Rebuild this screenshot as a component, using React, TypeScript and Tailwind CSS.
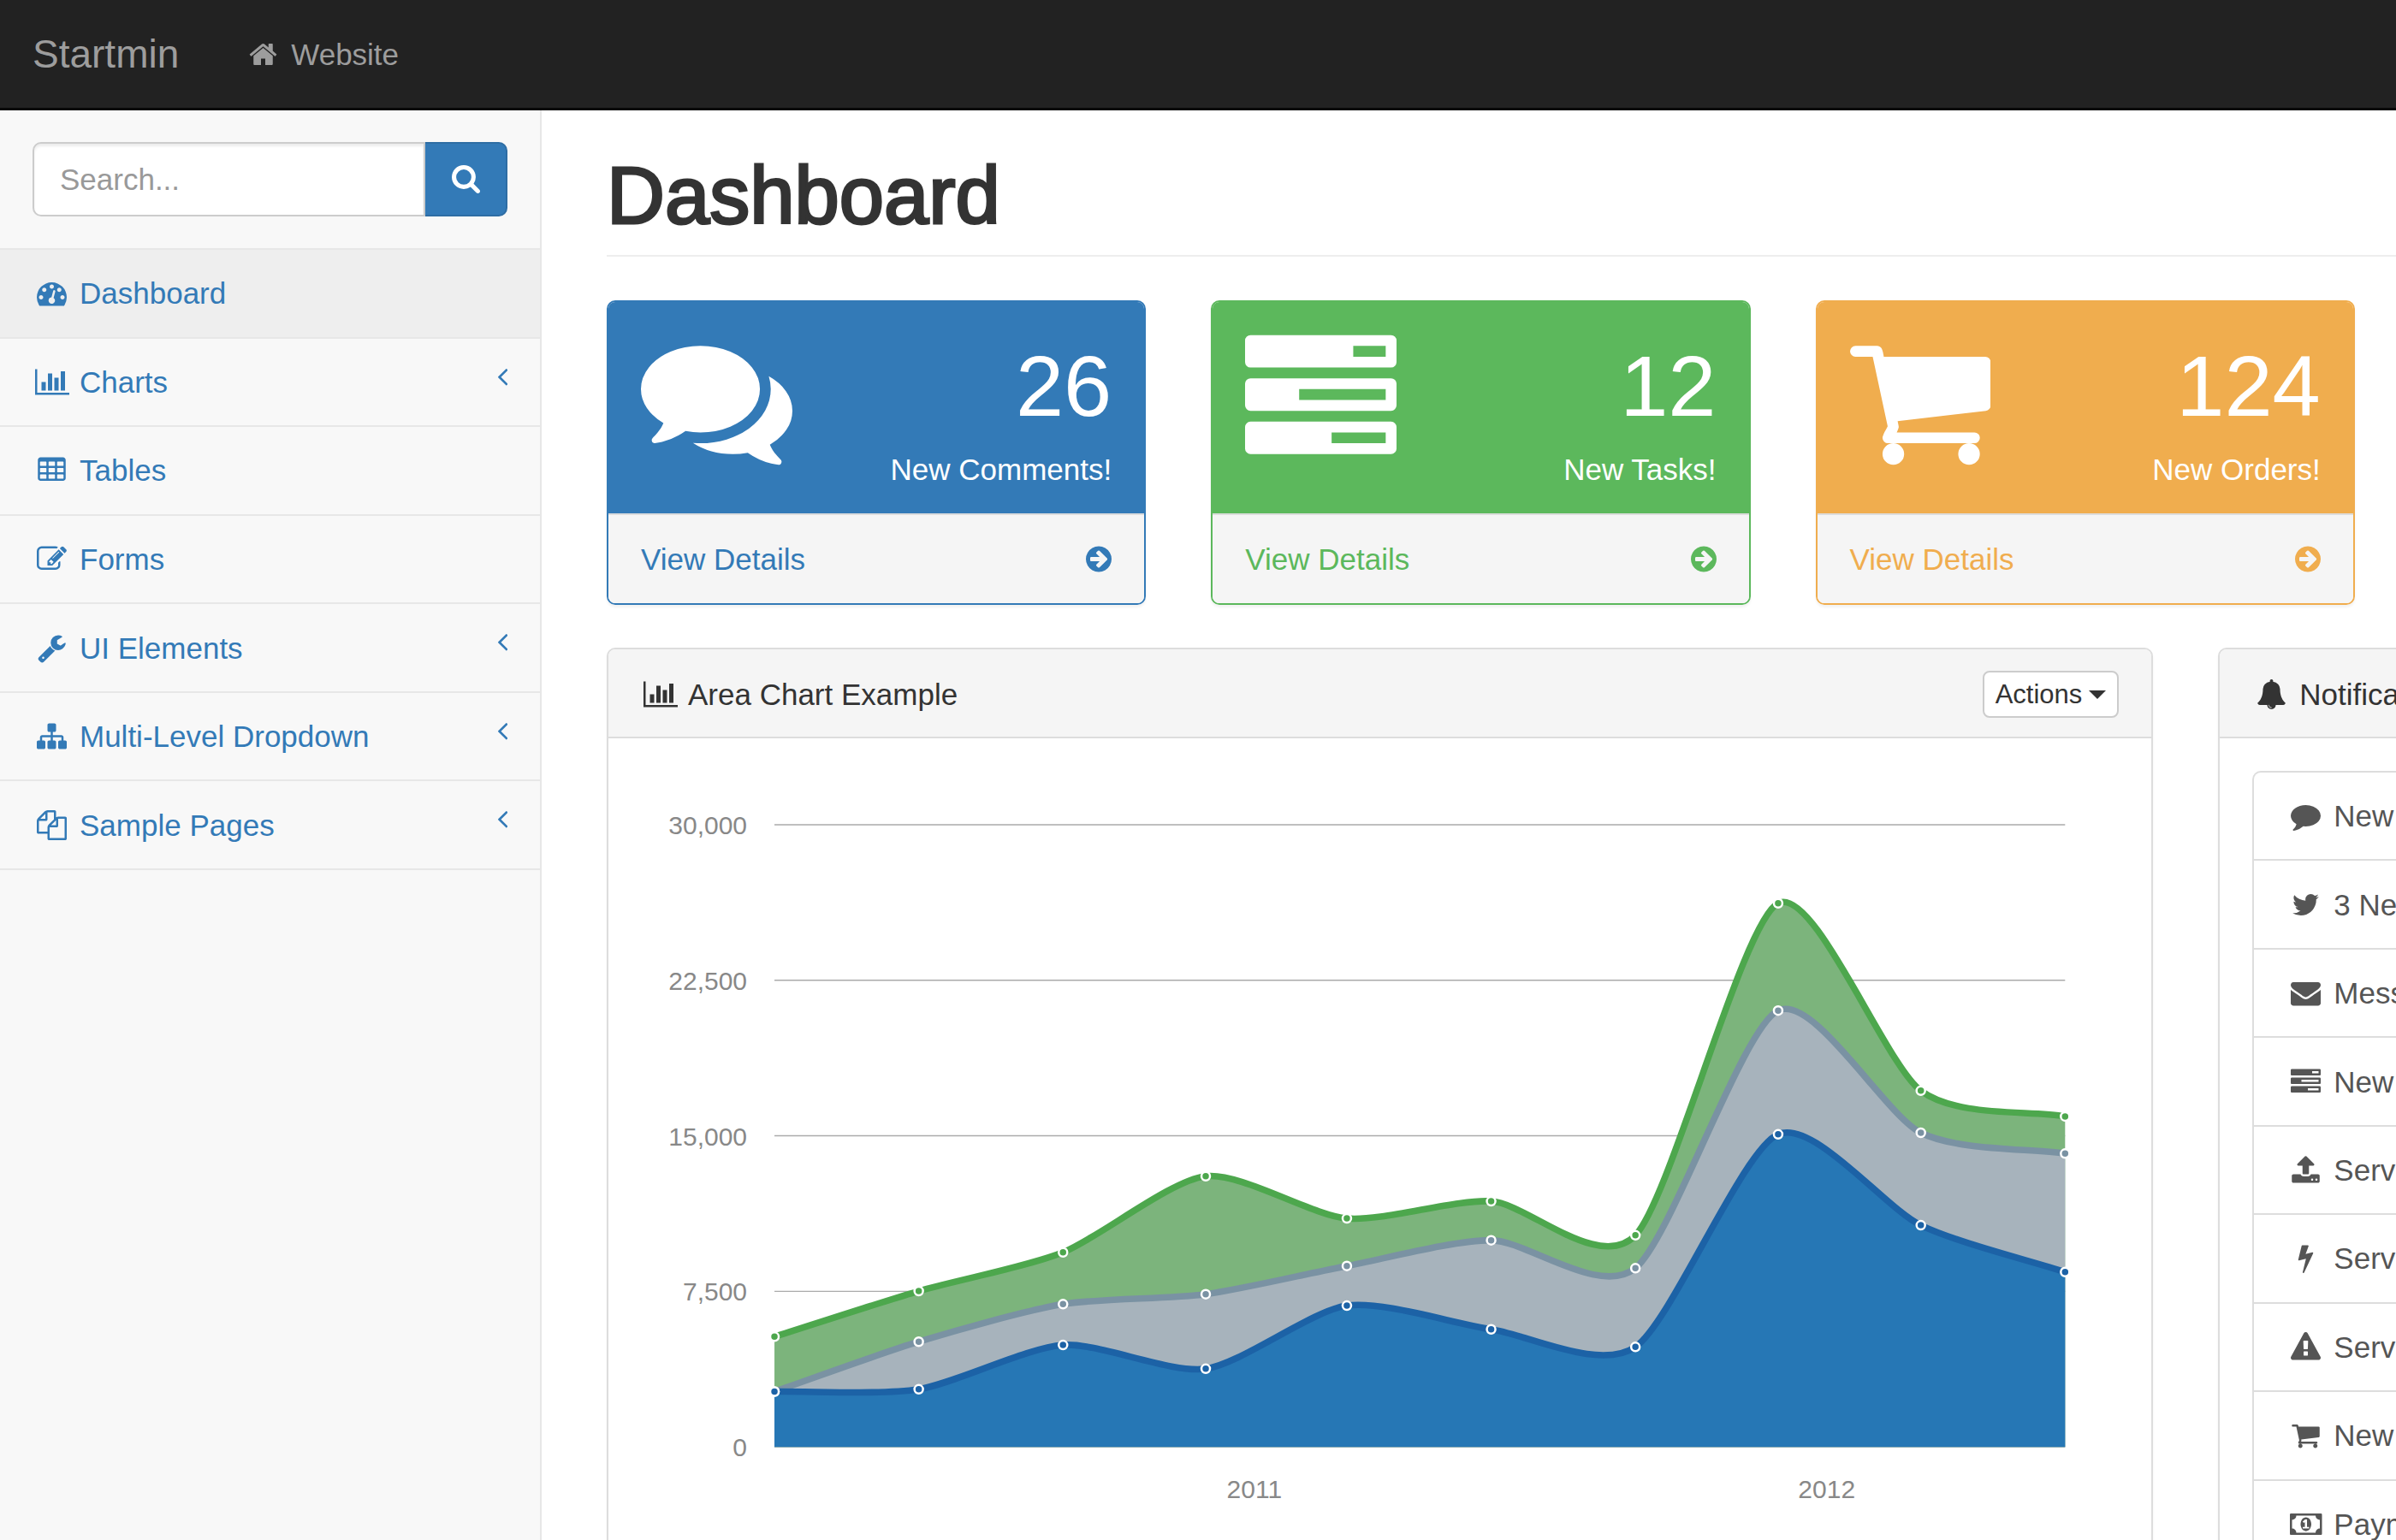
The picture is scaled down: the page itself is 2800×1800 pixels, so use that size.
import type { ReactNode } from "react";

/* ---------- icons (1792-unit grid) ---------- */

type Glyph = { box: string; d: string };

const cell = (x: number, y: number) =>
  `M${x} ${y}v-192q0-14-9-23t-23-9h-320q-14 0-23 9t-9 23v192q0 14 9 23t23 9h320q14 0 23-9t9-23z`;

const bar = (y: number) =>
  `M1792 ${y}v256q0 26-19 45t-45 19h-1664q-26 0-45-19t-19-45v-256q0-26 19-45t45-19h1664q26 0 45 19t19 45z`;

const SQUARE = "0 0 1792 1792";

const CART =
  "M704 1536q0 52-38 90t-90 38-90-38-38-90 38-90 90-38 90 38 38 90zm896 0q0 52-38 90t-90 38-90-38-38-90 38-90 90-38 90 38 38 90zm128-1088v512q0 24-16.5 42.5t-40.5 21.5l-1044 122q13 60 13 70 0 16-24 64h920q26 0 45 19t19 45-19 45-45 19h-1024q-26 0-45-19t-19-45q0-11 8-31.5t16-36 21.5-40 15.5-29.5l-177-823h-204q-26 0-45-19t-19-45 19-45 45-19h256q16 0 28.5 6.5t19.5 15.5 13 24.5 8 26 5.5 29.5 4.5 26h1201q26 0 45 19t19 45z";

const glyphs = {
  home: {
    box: SQUARE,
    d: "M1472 992v480q0 26-19 45t-45 19h-384v-384h-256v384h-384q-26 0-45-19t-19-45v-480q0-1 .5-3t.5-3l575-474 575 474q1 2 1 6zm223-69l-62 74q-8 9-21 11h-3q-13 0-21-7l-692-577-692 577q-12 8-24 7-13-2-21-11l-62-74q-8-10-7-23.5t11-21.5l719-599q32-26 76-26t76 26l244 204v-195q0-14 9-23t23-9h192q14 0 23 9t9 23v408l219 182q10 8 11 21.5t-7 23.5z",
  },
  search: {
    box: "64 128 1664 1664",
    d: "M1216 832q0-185-131.5-316.5t-316.5-131.5-316.5 131.5-131.5 316.5 131.5 316.5 316.5 131.5 316.5-131.5 131.5-316.5zm512 832q0 52-38 90t-90 38q-54 0-90-38l-343-342q-179 124-399 124-143 0-273.5-55.5t-225-150-150-225-55.5-273.5 55.5-273.5 150-225 225-150 273.5-55.5 273.5 55.5 225 150 150 225 55.5 273.5q0 220-124 399l343 343q37 37 37 90z",
  },
  dashboard: {
    box: SQUARE,
    d: "M384 1152q0-53-37.5-90.5t-90.5-37.5-90.5 37.5-37.5 90.5 37.5 90.5 90.5 37.5 90.5-37.5 37.5-90.5zm192-448q0-53-37.5-90.5t-90.5-37.5-90.5 37.5-37.5 90.5 37.5 90.5 90.5 37.5 90.5-37.5 37.5-90.5zm428 481l101-382q6-26-7.5-48.5t-38.5-29.5-48 6.5-30 39.5l-101 382q-60 5-107 43.5t-63 98.5q-20 77 20 146t117 89 146-20 89-117q16-60-6-117t-72-91zm660-33q0-53-37.5-90.5t-90.5-37.5-90.5 37.5-37.5 90.5 37.5 90.5 90.5 37.5 90.5-37.5 37.5-90.5zm-640-640q0-53-37.5-90.5t-90.5-37.5-90.5 37.5-37.5 90.5 37.5 90.5 90.5 37.5 90.5-37.5 37.5-90.5zm448 192q0-53-37.5-90.5t-90.5-37.5-90.5 37.5-37.5 90.5 37.5 90.5 90.5 37.5 90.5-37.5 37.5-90.5zm320 448q0 261-141 483-19 29-54 29h-1402q-35 0-54-29-141-221-141-483 0-182 71-348t191-286 286-191 348-71 348 71 286 191 191 286 71 348z",
  },
  barChart: {
    box: "0 0 2048 1792",
    d: "M640 896v512h-256v-512h256zm384-512v1024h-256v-1024h256zm1024 1152v128h-2048v-1536h128v1408h1920zm-640-896v768h-256v-768h256zm384-384v1152h-256v-1152h256z",
  },
  table: {
    box: SQUARE,
    d:
      [576, 1088, 1600].map((x) => [608, 992, 1376].map((y) => cell(x, y)).join("")).join("") +
      "M1728 288v1088q0 66-47 113t-113 47h-1344q-66 0-113-47t-47-113v-1088q0-66 47-113t113-47h1344q66 0 113 47t47 113z",
  },
  edit: {
    box: SQUARE,
    d: "M888 1184l116-116-152-152-116 116v56h96v96h56zm440-720q-16-16-33 1l-350 350q-17 17-1 33t33-1l350-350q17-17 1-33zm80 594v190q0 119-84.5 203.5t-203.5 84.5h-832q-119 0-203.5-84.5t-84.5-203.5v-832q0-119 84.5-203.5t203.5-84.5h832q63 0 117 25 15 7 18 23 3 17-9 29l-49 49q-14 14-32 8-23-6-45-6h-832q-66 0-113 47t-47 113v832q0 66 47 113t113 47h832q66 0 113-47t47-113v-126q0-13 9-22l64-64q15-15 35-7t20 29zm-96-738l288 288-672 672h-288v-288zm444 132l-92 92-288-288 92-92q28-28 68-28t68 28l152 152q28 28 28 68t-28 68z",
  },
  wrench: {
    box: SQUARE,
    d: "M448 1472q0-26-19-45t-45-19-45 19-19 45 19 45 45 19 45-19 19-45zm644-420l-682 682q-37 37-90 37-52 0-91-37l-106-108q-38-36-38-90 0-53 38-91l681-681q39 98 114.5 173.5t173.5 114.5zm634-435q0 39-23 106-47 134-164.5 217.5t-258.5 83.5q-185 0-316.5-131.5t-131.5-316.5 131.5-316.5 316.5-131.5q58 0 121.5 16.5t107.5 46.5q16 11 16 28t-16 28l-293 169v224l193 107q5-3 79-48.5t135.5-81 70.5-35.5q15 0 23.5 10t8.5 25z",
  },
  sitemap: {
    box: SQUARE,
    d: "M1792 1248v320q0 40-28 68t-68 28h-320q-40 0-68-28t-28-68v-320q0-40 28-68t68-28h96v-192h-512v192h96q40 0 68 28t28 68v320q0 40-28 68t-68 28h-320q-40 0-68-28t-28-68v-320q0-40 28-68t68-28h96v-192h-512v192h96q40 0 68 28t28 68v320q0 40-28 68t-68 28h-320q-40 0-68-28t-28-68v-320q0-40 28-68t68-28h96v-192q0-52 38-90t90-38h512v-192h-96q-40 0-68-28t-28-68v-320q0-40 28-68t68-28h320q40 0 68 28t28 68v320q0 40-28 68t-68 28h-96v192h512q52 0 90 38t38 90v192h96q40 0 68 28t28 68z",
  },
  files: {
    box: SQUARE,
    d: "M1696 384q40 0 68 28t28 68v1216q0 40-28 68t-68 28h-960q-40 0-68-28t-28-68v-288h-544q-40 0-68-28t-28-68v-672q0-40 20-88t48-76l408-408q28-28 76-48t88-20h416q40 0 68 28t28 68v328q68-40 128-40h416zm-544 213l-299 299h299v-299zm-640-384l-299 299h299v-299zm196 647l316-316v-416h-384v416q0 40-28 68t-68 28h-416v640h512v-256q0-40 20-88t48-76zm956 804v-1152h-384v416q0 40-28 68t-68 28h-416v640h896z",
  },
  angleLeft: {
    box: "621 0 582 1792",
    d: "M1203 544q0 13-10 23l-393 393 393 393q10 10 10 23t-10 23l-50 50q-10 10-23 10t-23-10l-466-466q-10-10-10-23t10-23l466-466q10-10 23-10t23 10l50 50q10 10 10 23z",
  },
  comments: {
    box: SQUARE,
    d: "M1408 768q0 139-94 257t-256.5 186.5-353.5 68.5q-86 0-176-16-124 88-278 128-36 9-86 16h-3q-11 0-20.5-8t-11.5-21q-1-3-1-6.5t.5-6.5 2-6l2.5-5t3.5-5.5 4-5 4.5-5 4-4.5q5-6 23-25t26-29.5 22.5-29 25-38.5 20.5-44q-124-72-195-177t-71-224q0-139 94-257t256.5-186.5 353.5-68.5 353.5 68.5 256.5 186.5 94 257zm384 256q0 120-71 224.5t-195 176.5q10 24 20.5 44t25 38.5 22.5 29 26 29.5 23 25q1 1 4 4.5t4.5 5 4 5 3.5 5.5l2.5 5t2 6 .5 6.5-1 6.5q-3 14-13 22t-22 7q-50-7-86-16-154-40-278-128-90 16-176 16-271 0-472-132 58 4 88 4 161 0 309-45t264-129q125-92 192-212t67-254q0-77-23-152 129 71 204 178t75 230z",
  },
  comment: {
    box: SQUARE,
    d: "M1792 896q0 174-120 321.5t-326 233-450 85.5q-70 0-145-8-198 175-460 242-49 14-114 22-17 2-30.5-9t-17.5-29v-1q-3-4-.5-12t2-10 4.5-9.5l6-9 7-8.5 8-9q7-8 31-34.5t34.5-38 31-39.5 32.5-51 27-59 26-76q-157-89-247.5-220t-90.5-281q0-130 71-248.5t191-204.5 286-136.5 348-50.5q244 0 450 85.5t326 233 120 321.5z",
  },
  tasks: {
    box: SQUARE,
    d:
      "M1024 1408h640v-128h-640v128zm-384-512h1024v-128h-1024v128zm640-512h384v-128h-384v128z" +
      [192, 704, 1216].map(bar).join(""),
  },
  cart: { box: SQUARE, d: CART },
  cartWide: { box: "64 0 1664 1792", d: CART },
  arrowCircle: {
    box: "128 0 1536 1792",
    d: "M1413 896q0-27-18-45l-91-91-362-362q-18-18-45-18t-45 18l-91 91q-18 18-18 45t18 45l189 189h-502q-26 0-45 19t-19 45v128q0 26 19 45t45 19h502l-189 189q-19 19-19 45t19 45l91 91q18 18 45 18t45-18l362-362 91-91q18-18 18-45zm251 0q0 209-103 385.5t-279.5 279.5-385.5 103-385.5-103-279.5-279.5-103-385.5 103-385.5 279.5-279.5 385.5-103 385.5 103 279.5 279.5 103 385.5z",
  },
  bell: {
    box: SQUARE,
    d: "M912 1696q0-16-16-16-59 0-101.5-42.5t-42.5-101.5q0-16-16-16t-16 16q0 73 51.5 124.5t124.5 51.5q16 0 16-16zm816-288q0 52-38 90t-90 38h-448q0 106-75 181t-181 75-181-75-75-181h-448q-52 0-90-38t-38-90q50-42 91-88t85-119.5 74.5-158.5 50-206 19.5-260q0-152 117-282.5t307-158.5q-8-19-8-39 0-40 28-68t68-28 68 28 28 68q0 20-8 39 190 28 307 158.5t117 282.5q0 139 19.5 260t50 206 74.5 158.5 85 119.5 91 88z",
  },
  twitter: {
    box: SQUARE,
    d: "M1684 408q-67 98-162 167 1 14 1 42 0 130-38 259.5t-115.5 248.5-184.5 210.5-258 146-323 54.5q-271 0-496-145 35 4 78 4 225 0 401-138-105-2-188-64.5t-114-159.5q33 5 61 5 43 0 85-11-112-23-185.5-111.5t-73.5-205.5v-4q68 38 146 41-66-44-105-115t-39-154q0-88 44-163 121 149 294.5 238.5t371.5 99.5q-8-38-8-74 0-134 94.5-228.5t228.5-94.5q140 0 236 102 109-21 205-78-37 115-142 178 93-10 186-50z",
  },
  envelope: {
    box: SQUARE,
    d: "M1792 710v794q0 66-47 113t-113 47h-1472q-66 0-113-47t-47-113v-794q44 49 101 87 362 246 497 345 57 42 92.5 65.5t94.5 48 110 24.5h2q51 0 110-24.5t94.5-48 92.5-65.5q170-123 498-345 57-39 100-87zm0-294q0 79-49 151t-122 123q-376 261-468 325-10 7-42.5 31t-54 38.5-52 32.5-57.5 27-50 9h-2q-23 0-50-9t-57.5-27-52-32.5-54-38.5-42.5-31q-91-64-262-182.5t-205-142.5q-62-42-117-115.5t-55-136.5q0-78 41.5-130t118.5-52h1472q65 0 112.5 47t47.5 113z",
  },
  upload: {
    box: SQUARE,
    d: "M1344 1472q0-26-19-45t-45-19-45 19-19 45 19 45 45 19 45-19 19-45zm256 0q0-26-19-45t-45-19-45 19-19 45 19 45 45 19 45-19 19-45zm128-224v320q0 40-28 68t-68 28h-1472q-40 0-68-28t-28-68v-320q0-40 28-68t68-28h427q21 56 70.5 92t110.5 36h256q61 0 110.5-36t70.5-92h427q40 0 68 28t28 68zm-325-648q-17 40-59 40h-256v448q0 26-19 45t-45 19h-256q-26 0-45-19t-19-45v-448h-256q-42 0-59-40-17-39 14-69l448-448q18-19 45-19t45 19l448 448q31 30 14 69z",
  },
  bolt: {
    box: SQUARE,
    d: "M1333 566q18 20 7 44l-540 1157q-13 25-42 25-4 0-14-2-17-5-25.5-19t-4.5-30l197-808-406 101q-4 1-12 1-18 0-31-11-18-15-13-39l201-825q4-14 16-23t28-9h328q19 0 32 12.5t13 29.5q0 8-5 18l-171 463 396-98q8-2 12-2 19 0 34 15z",
  },
  warning: {
    box: SQUARE,
    d: "M1024 1375v-190q0-14-9.5-23.5t-22.5-9.5h-192q-13 0-22.5 9.5t-9.5 23.5v190q0 14 9.5 23.5t22.5 9.5h192q13 0 22.5-9.5t9.5-23.5zm-2-374l18-459q0-12-10-19-13-11-24-11h-220q-11 0-24 11-10 7-10 21l17 457q0 10 10 16.5t24 6.5h185q14 0 23.5-6.5t10.5-16.5zm-14-934l768 1408q35 63-2 126-17 29-46.5 46t-63.5 17h-1536q-34 0-63.5-17t-46.5-46q-37-63-2-126l768-1408q17-31 47-49t65-18 65 18 47 49z",
  },
  money: {
    box: "0 0 1920 1792",
    d: "M768 1152h384v-96h-128v-448h-114l-148 137 77 80q42-37 55-57h2v288h-128v96zm512-256q0 70-21 142t-59.5 134-101.5 101-138 39-138-39-101.5-101-59.5-134-21-142 21-142 59.5-134 101.5-101 138-39 138 39 101.5 101 59.5 134 21 142zm512 256v-512q-106 0-181-75t-75-181h-1152q0 106-75 181t-181 75v512q106 0 181 75t75 181h1152q0-106 75-181t181-75zm128-832v1152q0 26-19 45t-45 19h-1792q-26 0-45-19t-19-45v-1152q0-26 19-45t45-19h1792q26 0 45 19t19 45z",
  },
} satisfies Record<string, Glyph>;

type IconName = keyof typeof glyphs;

function Icon({ name, className = "h-[35px] w-auto" }: { name: IconName; className?: string }) {
  const g = glyphs[name];
  return (
    <svg viewBox={g.box} className={`shrink-0 ${className}`} fill="currentColor" fillRule="evenodd" aria-hidden="true">
      <path d={g.d} />
    </svg>
  );
}

/* Icon centred in a fixed-width slot, followed by its label. */
function IconLabel({ icon, children }: { icon: IconName; children: ReactNode }) {
  return (
    <span className="flex items-center gap-[10px] whitespace-nowrap">
      <span className="flex w-[45px] shrink-0 justify-center">
        <Icon name={icon} />
      </span>
      {children}
    </span>
  );
}

/* ---------- header & sidebar ---------- */

function Navbar() {
  return (
    <header className="flex shrink-0 items-center border-b-[3px] border-[#080808] bg-[#222] text-[#9d9d9d]">
      <a href="#" className="px-[38px] text-[46px] leading-[126px]">
        Startmin
      </a>
      <a href="#" className="px-[38px]">
        <IconLabel icon="home">Website</IconLabel>
      </a>
    </header>
  );
}

const menu: { icon: IconName; label: string; nested?: boolean; active?: boolean }[] = [
  { icon: "dashboard", label: "Dashboard", active: true },
  { icon: "barChart", label: "Charts", nested: true },
  { icon: "table", label: "Tables" },
  { icon: "edit", label: "Forms" },
  { icon: "wrench", label: "UI Elements", nested: true },
  { icon: "sitemap", label: "Multi-Level Dropdown", nested: true },
  { icon: "files", label: "Sample Pages", nested: true },
];

function Sidebar() {
  return (
    <aside className="w-[633px] shrink-0 border-r-2 border-[#e7e7e7] bg-[#f8f8f8]">
      <form className="flex border-b-2 border-[#e7e7e7] px-[38px] py-[37px]" onSubmit={(e) => e.preventDefault()}>
        <input
          type="text"
          aria-label="Search"
          placeholder="Search..."
          className="h-[87px] min-w-0 flex-1 rounded-l-[10px] border-2 border-[#ccc] bg-white px-[30px] shadow-[inset_0_3px_3px_rgba(0,0,0,0.075)] outline-none placeholder:text-[#999]"
        />
        <button
          type="submit"
          aria-label="Submit search"
          className="flex w-24 items-center justify-center rounded-r-[10px] border-2 border-l-0 border-[#2e6da4] bg-[#337ab7] text-white"
        >
          <Icon name="search" className="size-[33px]" />
        </button>
      </form>
      <ul className="grid min-h-[725px] auto-rows-fr">
        {menu.map((m) => (
          <li key={m.label} className="border-b-2 border-[#e7e7e7]">
            <a
              href="#"
              className={`flex h-full items-center justify-between px-[38px] text-[#337ab7] ${m.active ? "bg-[#eee]" : ""}`}
            >
              <IconLabel icon={m.icon}>{m.label}</IconLabel>
              {m.nested && <Icon name="angleLeft" className="mt-[26px] h-[35px] w-auto self-start" />}
            </a>
          </li>
        ))}
      </ul>
    </aside>
  );
}

/* ---------- stat cards ---------- */

const cards: {
  icon: IconName;
  value: string;
  label: string;
  border: string;
  bg: string;
  text: string;
}[] = [
  { icon: "comments", value: "26", label: "New Comments!", border: "border-[#337ab7]", bg: "bg-[#337ab7]", text: "text-[#337ab7]" },
  { icon: "tasks", value: "12", label: "New Tasks!", border: "border-[#5cb85c]", bg: "bg-[#5cb85c]", text: "text-[#5cb85c]" },
  { icon: "cartWide", value: "124", label: "New Orders!", border: "border-[#f0ad4e]", bg: "bg-[#f0ad4e]", text: "text-[#f0ad4e]" },
];

function StatCard({ card }: { card: (typeof cards)[number] }) {
  return (
    <section
      className={`col-span-3 overflow-hidden rounded-[10px] border-2 shadow-[0_3px_3px_rgba(0,0,0,0.05)] ${card.border}`}
    >
      <div className={`flex items-start justify-between px-[38px] py-[26px] text-white ${card.bg}`}>
        <Icon name={card.icon} className="h-[177px] w-auto" />
        <div className="text-right">
          <div className="text-[101px] leading-[144px]">{card.value}</div>
          <div className="leading-[51px]">{card.label}</div>
        </div>
      </div>
      <a
        href="#"
        className={`flex items-center justify-between border-t-2 border-t-[#ddd] bg-[#f5f5f5] px-[38px] py-[26px] leading-[51px] ${card.text}`}
      >
        <span>View Details</span>
        <Icon name="arrowCircle" />
      </a>
    </section>
  );
}

/* ---------- panels ---------- */

function Panel({
  icon,
  title,
  action,
  className,
  children,
}: {
  icon: IconName;
  title: string;
  action?: ReactNode;
  className: string;
  children: ReactNode;
}) {
  return (
    <section
      className={`overflow-hidden rounded-[10px] border-2 border-[#ddd] bg-white shadow-[0_3px_3px_rgba(0,0,0,0.05)] ${className}`}
    >
      <div className="flex h-[104px] items-center justify-between border-b-2 border-[#ddd] bg-[#f5f5f5] px-[38px] pt-[3px]">
        <h2>
          <IconLabel icon={icon}>{title}</IconLabel>
        </h2>
        {action}
      </div>
      <div className="p-[38px]">{children}</div>
    </section>
  );
}

/* ---------- area chart ---------- */

const PLOT = { left: 156, right: 1664, top: 63, bottom: 790 };
const MAX = 30000;
const SPAN_DAYS = 823;

const px = (day: number) => PLOT.left + ((PLOT.right - PLOT.left) * day) / SPAN_DAYS;
const py = (v: number) => PLOT.bottom - ((PLOT.bottom - PLOT.top) * v) / MAX;

/* Each row: days since the first quarter, iPhone, iPad, iPod Touch. */
const quarters = [
  [0, 2666, 0, 2647],
  [92, 2778, 2294, 2441],
  [184, 4912, 1969, 2501],
  [275, 3767, 3597, 5689],
  [365, 6810, 1914, 2293],
  [457, 5670, 4293, 1881],
  [549, 4820, 3795, 1588],
  [640, 15073, 5967, 5175],
  [731, 10687, 4460, 2028],
  [823, 8432, 5713, 1791],
];

type Point = { x: number; y: number };

const stack = (depth: number): Point[] =>
  quarters.map(([day, ...vals]) => ({
    x: px(day),
    y: py(vals.slice(0, depth).reduce((a, b) => a + b, 0)),
  }));

/* Painted back to front: the tallest stack first. */
const series = [
  { points: stack(3), line: "#4da74d", fill: "#7cb47c" },
  { points: stack(2), line: "#7a92a3", fill: "#a7b3bc" },
  { points: stack(1), line: "#1c62a6", fill: "#2677b5" },
];

function smooth(points: Point[]) {
  const slope = points.map((_, i) => {
    const a = points[Math.max(0, i - 1)];
    const b = points[Math.min(points.length - 1, i + 1)];
    return (b.y - a.y) / (b.x - a.x);
  });
  return points
    .map((p, i) => {
      if (i === 0) return `M${p.x},${p.y}`;
      const q = points[i - 1];
      const dx = (p.x - q.x) / 4;
      const y1 = Math.min(PLOT.bottom, q.y + dx * slope[i - 1]);
      const y2 = Math.min(PLOT.bottom, p.y - dx * slope[i]);
      return `C${q.x + dx},${y1},${p.x - dx},${y2},${p.x},${p.y}`;
    })
    .join("");
}

function AreaChart() {
  return (
    <svg viewBox="0 0 1727 890" className="block h-auto w-full" role="img" aria-label="Area chart of quarterly totals">
      {[30000, 22500, 15000, 7500, 0].map((v) => (
        <g key={v}>
          <text x={124} y={py(v) + 11} textAnchor="end" className="fill-[#888] text-[30px]">
            {v.toLocaleString("en-US")}
          </text>
          <path d={`M${PLOT.left},${py(v)}H${PLOT.right}`} stroke="#aaa" strokeWidth={1.4} />
        </g>
      ))}
      <text x={px(306)} y={850} textAnchor="middle" className="fill-[#888] text-[30px]">
        2011
      </text>
      <text x={px(671)} y={850} textAnchor="middle" className="fill-[#888] text-[30px]">
        2012
      </text>
      {series.map((s) => (
        <g key={s.line}>
          <path d={`${smooth(s.points)}L${PLOT.right},${PLOT.bottom}H${PLOT.left}Z`} fill={s.fill} />
          <path d={smooth(s.points)} fill="none" stroke={s.line} strokeWidth={7.6} />
        </g>
      ))}
      {series.map((s) =>
        s.points.map((p) => (
          <circle key={`${s.line}${p.x}`} cx={p.x} cy={p.y} r={5} fill={s.line} stroke="#fff" strokeWidth={2.5} />
        )),
      )}
    </svg>
  );
}

/* ---------- notifications ---------- */

const notifications: { icon: IconName; label: string }[] = [
  { icon: "comment", label: "New Comment" },
  { icon: "twitter", label: "3 New Followers" },
  { icon: "envelope", label: "Message Sent" },
  { icon: "tasks", label: "New Task" },
  { icon: "upload", label: "Server Rebooted" },
  { icon: "bolt", label: "Server Crashed!" },
  { icon: "warning", label: "Server Not Responding" },
  { icon: "cart", label: "New Order Placed" },
  { icon: "money", label: "Payment Received" },
];

function NotificationList() {
  return (
    <ul className="grid min-h-[933px] auto-rows-fr rounded-[10px] border-2 border-b-0 border-[#ddd] text-[#555]">
      {notifications.map((n) => (
        <li key={n.label} className="border-b-2 border-[#ddd]">
          <a href="#" className="flex h-full items-center px-[38px]">
            <IconLabel icon={n.icon}>{n.label}</IconLabel>
          </a>
        </li>
      ))}
    </ul>
  );
}

export default function App() {
  return (
    <div className="flex h-screen flex-col overflow-hidden bg-white font-['Liberation_Sans',Arial,sans-serif] text-[35px] leading-[51px] text-[#333]">
      <Navbar />
      <div className="flex min-h-0 flex-1">
        <Sidebar />
        <main className="min-w-0 flex-1 overflow-hidden px-[76px] pt-[50px]">
          <div className="min-w-[2749px]">
            <h1 className="mb-[51px] border-b-2 border-[#eee] pb-[19px] text-[94px] leading-[100px] [-webkit-text-stroke:3px_#333]">
              Dashboard
            </h1>
            <div className="grid grid-cols-12 items-start gap-x-[76px] gap-y-[50px]">
              {cards.map((c) => (
                <StatCard key={c.label} card={c} />
              ))}
              <Panel
                icon="barChart"
                title="Area Chart Example"
                className="col-span-8 col-start-1"
                action={
                  <button
                    type="button"
                    className="flex h-[55px] items-center gap-2 rounded-lg border-2 border-[#ccc] bg-white px-[13px] text-[31px]"
                  >
                    Actions
                    <svg viewBox="0 0 20 10" className="h-[10px] w-5" fill="currentColor" aria-hidden="true">
                      <path d="M0 0h20L10 10z" />
                    </svg>
                  </button>
                }
              >
                <AreaChart />
              </Panel>
              <Panel icon="bell" title="Notifications Panel" className="col-span-4">
                <NotificationList />
              </Panel>
            </div>
          </div>
        </main>
      </div>
    </div>
  );
}
